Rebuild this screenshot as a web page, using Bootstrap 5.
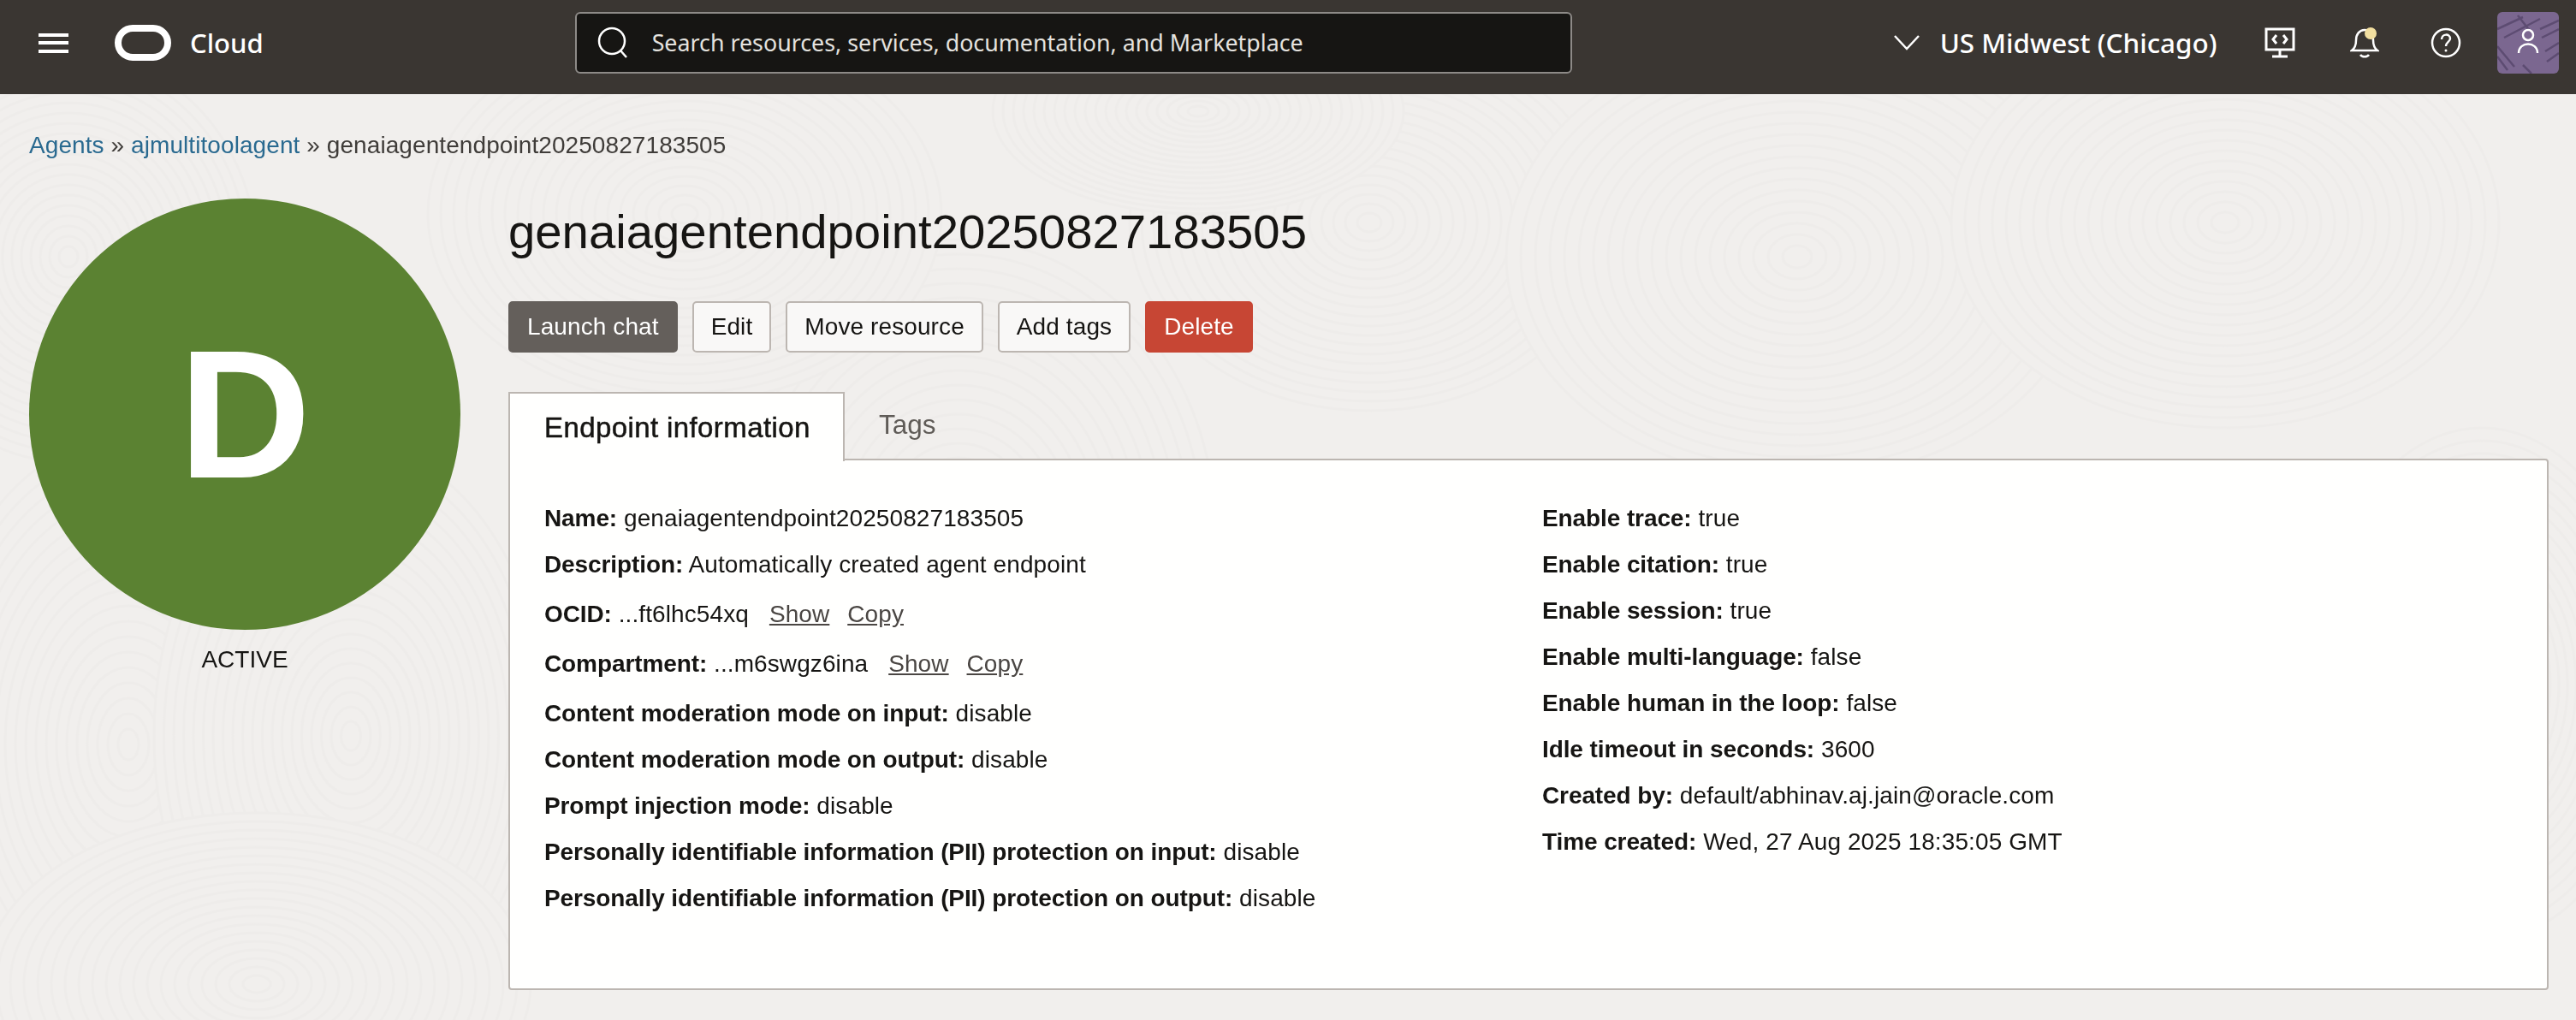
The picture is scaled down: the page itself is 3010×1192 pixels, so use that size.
<!DOCTYPE html>
<html lang="en">
<head>
  <meta charset="UTF-8">
  <title>genaiagentendpoint20250827183505</title>
  <link href="https://cdn.jsdelivr.net/npm/bootstrap@5.3.0/dist/css/bootstrap.min.css" rel="stylesheet">
  <style>
    html, body { height: 100%; }
    body { background: #f1efed; color: #161513; font-family: "Liberation Sans", Arial, sans-serif; font-size: 28px; overflow: hidden; }
    #swirlBg { position: fixed; inset: 0; z-index: -1; }

    .top-bar { height: 110px; background: #3a3632; padding: 0 20px 10px 45px; flex-wrap: nowrap; justify-content: flex-start; }
    .top-bar, .search-box, .region-name, .cloud-name { font-family: "Noto Sans", "Open Sans", sans-serif; }
    .menu-btn { width: 35px; height: 23px; border-top: 4px solid #fff; border-bottom: 4px solid #fff; position: relative; }
    .menu-btn::after { content: ""; position: absolute; left: 0; right: 0; top: 5.5px; height: 4px; background: #fff; }
    .cloud-logo { margin-left: 54px; width: 66px; height: 42px; border: 8px solid #fff; border-radius: 21px; }
    .cloud-name { margin-left: 22px; color: #fff; font-size: 31px; font-weight: 500; }
    .search-box { margin-left: 364px; width: 1165px; height: 72px; background: #161513; border: 2px solid #8d8a87; border-radius: 6px; color: #e4e2df; font-size: 26.8px; padding-left: 24px; }
    .search-box span { margin-left: 26px; }
    .region-pick { margin-left: 376px; color: #fff; }
    .region-name { margin-left: 24px; font-size: 31.4px; font-weight: 500; white-space: nowrap; }
    .tool-ico { display: block; }
    .user-tile { width: 72px; height: 72px; border-radius: 6px; background: #7b6790; overflow: hidden; }

    .crumbs { padding: 43px 34px 0; height: 122px; font-size: 28px; line-height: 34px; letter-spacing: .08px; color: #3f3c39; }
    .crumbs a { color: #2a6a90; text-decoration: none; }
    .page-main { padding: 0 32px 0 34px; gap: 56px; }
    .side-col { width: 504px; flex: none; }
    .state-disc { width: 504px; height: 504px; border-radius: 50%; background: #5b8232; color: #fff; font-size: 214px; font-weight: 700; line-height: 504px; text-align: center; }
    .state-label { margin-top: 17px; font-size: 28px; line-height: 36px; text-align: center; }
    .detail-col { flex: 1; min-width: 0; }
    .detail-title { font-size: 56.3px; line-height: 76px; margin: 1px 0 0; font-weight: 400; }
    .act-row { margin-top: 43px; gap: 17px; }
    .act-btn { height: 60px; font-size: 28px; line-height: 56px; letter-spacing: .1px; padding: 0 20px; border-radius: 5px; border: 2px solid #bcb6b1; background: #f9f8f7; color: #161513; white-space: nowrap; }
    .act-btn.dark-btn { background: #645f5b; border-color: #645f5b; color: #fff; }
    .act-btn.red-btn { background: #c74634; border-color: #c74634; color: #fff; }
    .info-tabs { margin-top: 46px; border-bottom: 0; position: relative; z-index: 1; }
    .info-tabs .nav-link { height: 81px; border: 0; border-radius: 0; padding: 0 40px; font-size: 31.5px; line-height: 76px; color: #5f5b57; background: none; }
    .info-tabs .nav-link.active { width: 393px; padding: 0 0 0 40px; color: #161513; font-size: 33px; line-height: 80px; letter-spacing: .4px; -webkit-text-stroke: .5px #161513; white-space: nowrap; background: #fffffe; border: 2px solid #bcb6b1; border-bottom: 0; margin-bottom: -2px; }
    .info-card { height: 621px; margin-top: -2px; background: #fffffe; border: 2px solid #bcb6b1; border-radius: 0 4px 4px 4px; padding: 50px 40px 0; }
    .info-line { line-height: 36px; margin-bottom: 18px; white-space: nowrap; letter-spacing: .1px; }
    .info-line b { font-weight: 700; letter-spacing: -.1px; }
    .info-line.wide-gap { margin-bottom: 22px; margin-top: 22px; }
    .info-line a { color: #4a4643; margin-left: 16px; }
    .info-line a + a { margin-left: 13px; }
    .right-info { padding-left: 16px; }
  </style>
</head>
<body>
  <svg id="swirlBg" width="3010" height="1192"></svg>

  <!-- top bar -->
  <nav class="navbar top-bar d-flex align-items-center">
    <div class="menu-btn"></div>
    <div class="cloud-logo"></div>
    <div class="cloud-name">Cloud</div>
    <div class="search-box d-flex align-items-center">
      <svg width="38" height="38" viewBox="0 0 38 38" fill="none" stroke="#fff" stroke-width="2.5"><circle cx="17" cy="17" r="15"/><path d="M27 28l7 8"/></svg>
      <span>Search resources, services, documentation, and Marketplace</span>
    </div>
    <div class="region-pick d-flex align-items-center">
      <svg width="30" height="18" viewBox="0 0 30 18" fill="none" stroke="#fff" stroke-width="2.5"><path d="M1 1l14 15L29 1"/></svg>
      <span class="region-name">US Midwest (Chicago)</span>
    </div>
    <svg class="tool-ico ms-auto" width="36" height="36" viewBox="0 0 36 36" fill="none" stroke="#fff" stroke-width="3"><rect x="2" y="2" width="32" height="24"/><path d="M14 9l-4 5 4 5M22 9l4 5-4 5M18 26v7M9 34h18"/></svg>
    <svg class="tool-ico" style="margin-left:64px" width="34" height="36" viewBox="0 0 34 36" fill="none" stroke="#fff" stroke-width="2.5"><path d="M2 27c4-3 5-6 5-12 0-7 4-12 10-12s10 5 10 12c0 6 1 9 5 12zM12 32c2 3 8 3 10 0"/><circle cx="24" cy="7" r="7" fill="#f2dfa0" stroke="none"/></svg>
    <svg class="tool-ico" style="margin-left:60px" width="36" height="36" viewBox="0 0 36 36" fill="none" stroke="#fff" stroke-width="2.5"><circle cx="18" cy="18" r="16"/><path d="M13 14c0-7 10-7 10-1 0 4-5 4-5 9"/><circle cx="18" cy="27" r="1.5" fill="#fff" stroke="none"/></svg>
    <div class="user-tile d-flex align-items-center justify-content-center" style="margin-left:42px">
      <svg width="72" height="72" viewBox="0 0 72 72" fill="none"><path d="M0 20l30-14M8 30L50 8M24 4l14 18M50 20l22-10M52 30l20-10M0 40l20 24M0 52l12 16M56 46l16-10M58 58l14-10M30 62l10 10" stroke="#5d4c72" stroke-width="2.5"/><circle cx="36" cy="27" r="6" stroke="#fff" stroke-width="2.5"/><path d="M25 48c0-14 22-14 22 0" stroke="#fff" stroke-width="2.5"/></svg>
    </div>
  </nav>

  <div class="crumbs"><a href="#">Agents</a> » <a href="#">ajmultitoolagent</a> » genaiagentendpoint20250827183505</div>

  <main class="page-main d-flex">
    <div class="side-col">
      <div class="state-disc">D</div>
      <div class="state-label">ACTIVE</div>
    </div>

    <div class="detail-col">
      <h1 class="detail-title">genaiagentendpoint20250827183505</h1>
      <div class="act-row d-flex">
        <button class="btn act-btn dark-btn">Launch chat</button>
        <button class="btn act-btn">Edit</button>
        <button class="btn act-btn">Move resource</button>
        <button class="btn act-btn">Add tags</button>
        <button class="btn act-btn red-btn">Delete</button>
      </div>

      <ul class="nav nav-tabs info-tabs">
        <li class="nav-item"><a class="nav-link active" href="#">Endpoint information</a></li>
        <li class="nav-item"><a class="nav-link" href="#">Tags</a></li>
      </ul>
      <div class="info-card">
        <div class="row g-0">
          <div class="col-6" id="leftInfo">
            <div class="info-line"><b>Name:</b> genaiagentendpoint20250827183505</div>
            <div class="info-line"><b>Description:</b> Automatically created agent endpoint</div>
            <div class="info-line wide-gap"><b>OCID:</b> ...ft6lhc54xq <a href="#">Show</a> <a href="#">Copy</a></div>
            <div class="info-line wide-gap"><b>Compartment:</b> ...m6swgz6ina <a href="#">Show</a> <a href="#">Copy</a></div>
            <div class="info-line"><b>Content moderation mode on input:</b> disable</div>
            <div class="info-line"><b>Content moderation mode on output:</b> disable</div>
            <div class="info-line"><b>Prompt injection mode:</b> disable</div>
            <div class="info-line"><b>Personally identifiable information (PII) protection on input:</b> disable</div>
            <div class="info-line"><b>Personally identifiable information (PII) protection on output:</b> disable</div>
          </div>
          <div class="col-6 right-info">
            <div class="info-line"><b>Enable trace:</b> true</div>
            <div class="info-line"><b>Enable citation:</b> true</div>
            <div class="info-line"><b>Enable session:</b> true</div>
            <div class="info-line"><b>Enable multi-language:</b> false</div>
            <div class="info-line"><b>Enable human in the loop:</b> false</div>
            <div class="info-line"><b>Idle timeout in seconds:</b> 3600</div>
            <div class="info-line"><b>Created by:</b> default/abhinav.aj.jain@oracle.com</div>
            <div class="info-line"><b>Time created:</b> Wed, 27 Aug 2025 18:35:05 GMT</div>
          </div>
        </div>
      </div>
    </div>
  </main>

  <script src="https://cdn.jsdelivr.net/npm/bootstrap@5.3.0/dist/js/bootstrap.bundle.min.js"></script>
  <script>
    // faint fingerprint swirls behind the page
    const swirls = [[150,870,240,360],[410,860,230,340],[80,300,220,240],[1120,620,300,340],[800,250,300,220],[1600,260,280,220],[2100,300,340,260],[2600,260,320,240],[2900,800,200,300],[300,1150,320,200],[1400,130,240,120]];
    const svgEl = document.getElementById('swirlBg');
    let rings = '';
    swirls.forEach(s => {
      for (let k = 1; k >= 0.04; k -= 0.05) {
        rings += `<ellipse cx="${s[0]}" cy="${s[1]}" rx="${s[2]*k}" ry="${s[3]*k}" fill="#f1efed" stroke="#eeecea" stroke-width="3"/>`;
      }
    });
    svgEl.innerHTML = rings;
  </script>
</body>
</html>
